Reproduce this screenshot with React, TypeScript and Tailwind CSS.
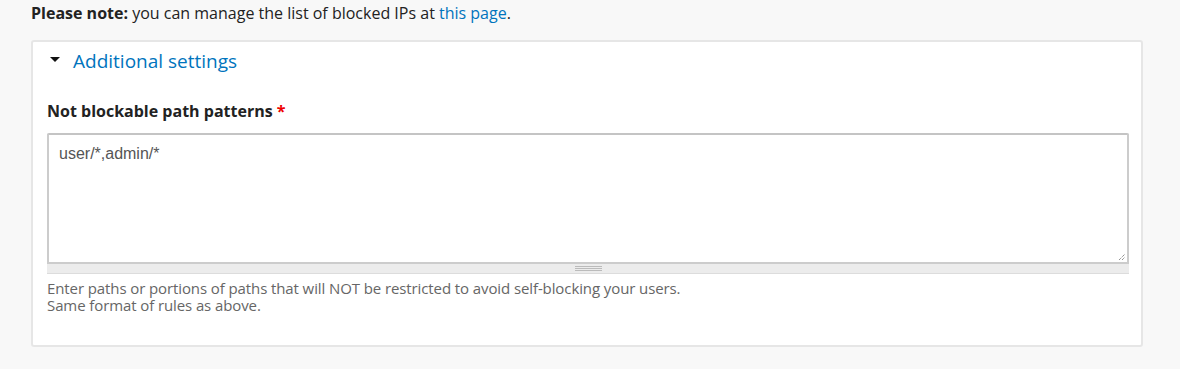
export default function App() {
  return (
    <div className="w-[1180px] h-[369px] bg-[#f8f8f8] overflow-hidden text-[#222330]" style={{ fontFamily: '"Open Sans", "Noto Sans", sans-serif' }}>
      <div className="pl-[31px] pr-[37px] pt-[3px]">
        <p className="text-[16px] leading-[20px] text-[#222]">
          <span className="font-bold">Please note:</span> you can manage the list of blocked IPs at{" "}
          <a className="text-[#0074bd]">this page</a>.
        </p>
        <div className="mt-[17px] bg-white border-2 border-[#e6e6e6] rounded-[3px] h-[307px]">
          <div className="flex items-center pl-[15px] pt-[7px] h-[31px]">
            <svg width="12" height="8" viewBox="0 0 12 8" className="mr-[12px] ml-[1px] mt-[-2px]">
              <polygon points="1,1 11,1 6,6" fill="#111" />
            </svg>
            <span className="text-[19px] text-[#0074bd] leading-[24px]">Additional settings</span>
          </div>
          <div className="pl-[14px] pr-[12px] pt-[28px]">
            <div className="text-[16px] font-bold leading-[20px] text-[#222]">
              Not blockable path patterns <span className="text-[#e00]">*</span>
            </div>
            <div className="mt-[12px]">
              <div className="relative h-[131px] border-2 border-[#ccc] border-t-[#c4c4c4] rounded-tl-[2px] rounded-tr-[2px] bg-white px-[10px] pt-[10px] text-[16px] leading-[18px] text-[#555]" style={{ fontFamily: '"Liberation Sans", Arial, sans-serif' }}>
                user/*,admin/*
                <svg width="8" height="8" viewBox="0 0 8 8" className="absolute right-[1px] bottom-[1px]">
                  <line x1="1" y1="7" x2="7" y2="1" stroke="#666" strokeWidth="1" strokeDasharray="1 1" />
                  <line x1="4" y1="7" x2="7" y2="4" stroke="#666" strokeWidth="1" strokeDasharray="1 1" />
                </svg>
              </div>
              <div className="h-[10px] bg-[#ececec] border-b border-[#dcdcdc] flex items-center justify-center">
                <div className="flex flex-col gap-[1px] w-[27px]">
                  <div className="h-[1px] bg-[#bbb]" />
                  <div className="h-[1px] bg-[#bbb]" />
                  <div className="h-[1px] bg-[#bbb]" />
                </div>
              </div>
            </div>
            <div className="mt-[6px] text-[15px] leading-[17px] text-[#666] tracking-[-0.1px]">
              <div>Enter paths or portions of paths that will NOT be restricted to avoid self-blocking your users.</div>
              <div>Same format of rules as above.</div>
            </div>
          </div>
        </div>
      </div>
    </div>
  );
}
